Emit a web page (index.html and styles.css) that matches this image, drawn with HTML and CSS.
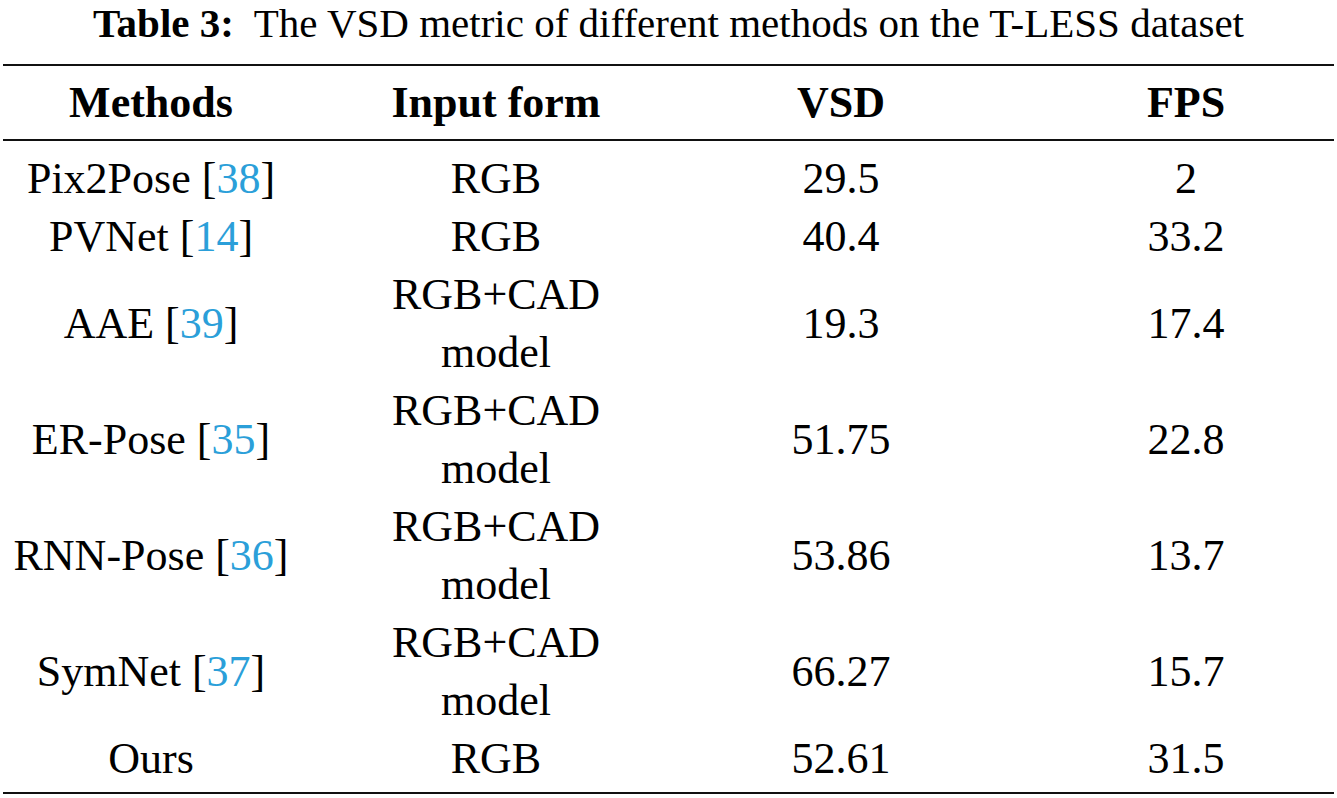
FILE: index.html
```html
<!DOCTYPE html>
<html>
<head>
<meta charset="utf-8">
<link rel="stylesheet" href="styles.css">
</head>
<body>
<div class="page">
  <div class="caption"><b>Table 3:</b>&nbsp; The VSD metric of different methods on the T-LESS dataset</div>
  <div class="table">
    <div class="row head">
      <div class="cell">Methods</div>
      <div class="cell">Input form</div>
      <div class="cell">VSD</div>
      <div class="cell">FPS</div>
    </div>
    <div class="body">
      <div class="row">
        <div class="cell">Pix2Pose [<span class="ref">38</span>]</div>
        <div class="cell">RGB</div>
        <div class="cell">29.5</div>
        <div class="cell">2</div>
      </div>
      <div class="row">
        <div class="cell">PVNet [<span class="ref">14</span>]</div>
        <div class="cell">RGB</div>
        <div class="cell">40.4</div>
        <div class="cell">33.2</div>
      </div>
      <div class="row">
        <div class="cell">AAE [<span class="ref">39</span>]</div>
        <div class="cell">RGB+CAD<br>model</div>
        <div class="cell">19.3</div>
        <div class="cell">17.4</div>
      </div>
      <div class="row">
        <div class="cell">ER-Pose [<span class="ref">35</span>]</div>
        <div class="cell">RGB+CAD<br>model</div>
        <div class="cell">51.75</div>
        <div class="cell">22.8</div>
      </div>
      <div class="row">
        <div class="cell">RNN-Pose [<span class="ref">36</span>]</div>
        <div class="cell">RGB+CAD<br>model</div>
        <div class="cell">53.86</div>
        <div class="cell">13.7</div>
      </div>
      <div class="row">
        <div class="cell">SymNet [<span class="ref">37</span>]</div>
        <div class="cell">RGB+CAD<br>model</div>
        <div class="cell">66.27</div>
        <div class="cell">15.7</div>
      </div>
      <div class="row">
        <div class="cell">Ours</div>
        <div class="cell">RGB</div>
        <div class="cell">52.61</div>
        <div class="cell">31.5</div>
      </div>
    </div>
  </div>
</div>
</body>
</html>
```
FILE: styles.css
```css
html, body {
  margin: 0;
  padding: 0;
  background: #ffffff;
}
body {
  font-family: "Liberation Serif", "Times New Roman", serif;
  color: #000000;
}
.page {
  width: 1337px;
  height: 798px;
  overflow: hidden;
  padding: 0 3px;
  box-sizing: border-box;
}
.caption {
  font-size: 41px;
  line-height: 46px;
  height: 64px;
  text-align: center;
  white-space: nowrap;
  box-sizing: border-box;
}
.caption b {
  font-weight: bold;
}
.table {
  border-top: 2px solid #111;
  border-bottom: 2px solid #111;
  font-size: 44px;
}
.row {
  display: grid;
  grid-template-columns: repeat(4, 290px);
  column-gap: 55px;
  padding-left: 3px;
}
.cell {
  display: flex;
  align-items: center;
  justify-content: center;
  text-align: center;
  white-space: nowrap;
  line-height: 58px;
}
.head {
  font-weight: bold;
  padding-top: 8px;
  padding-bottom: 7px;
  border-bottom: 2px solid #111;
}
.body {
  padding-top: 9px;
  padding-bottom: 4px;
}
.ref {
  color: #2b9fd9;
}
```
